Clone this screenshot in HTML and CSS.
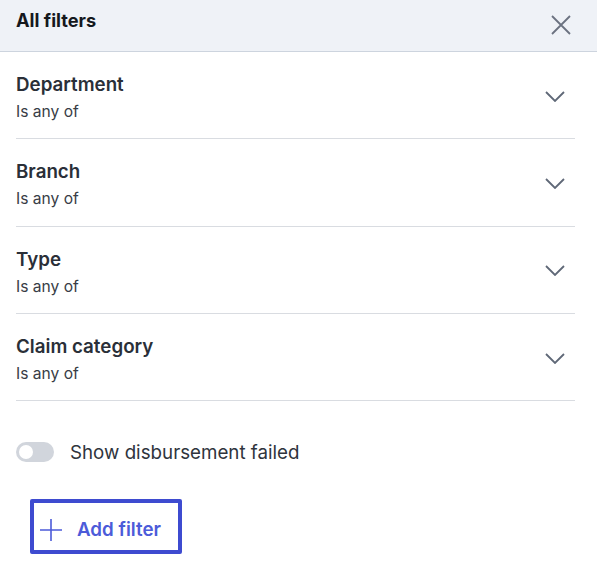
FILE: index.html
```html
<!DOCTYPE html>
<html>
<head>
<meta charset="utf-8">
<link rel="stylesheet" href="styles.css">
</head>
<body>
<div class="panel">
  <div class="header">
    <div class="title">All filters</div>
    <button class="close" aria-label="Close">
      <svg width="20" height="20" viewBox="0 0 20 20"><path d="M1 1 L19 19 M19 1 L1 19" stroke="#6b7280" stroke-width="1.8" fill="none"/></svg>
    </button>
  </div>
  <div class="rows">
    <div class="row">
      <div class="text"><div class="name">Department</div><div class="sub">Is any of</div></div>
      <svg class="chev" width="20" height="11" viewBox="0 0 20 11"><path d="M1 1 L10 10 L19 1" stroke="#5f6877" stroke-width="1.8" fill="none"/></svg>
    </div>
    <div class="row">
      <div class="text"><div class="name">Branch</div><div class="sub">Is any of</div></div>
      <svg class="chev" width="20" height="11" viewBox="0 0 20 11"><path d="M1 1 L10 10 L19 1" stroke="#5f6877" stroke-width="1.8" fill="none"/></svg>
    </div>
    <div class="row">
      <div class="text"><div class="name">Type</div><div class="sub">Is any of</div></div>
      <svg class="chev" width="20" height="11" viewBox="0 0 20 11"><path d="M1 1 L10 10 L19 1" stroke="#5f6877" stroke-width="1.8" fill="none"/></svg>
    </div>
    <div class="row">
      <div class="text"><div class="name">Claim category</div><div class="sub">Is any of</div></div>
      <svg class="chev" width="20" height="11" viewBox="0 0 20 11"><path d="M1 1 L10 10 L19 1" stroke="#5f6877" stroke-width="1.8" fill="none"/></svg>
    </div>
  </div>
  <div class="toggle-row">
    <span class="toggle"><span class="knob"></span></span>
    <span class="toggle-label">Show disbursement failed</span>
  </div>
  <div class="actions">
    <button class="add">
      <svg width="22" height="22" viewBox="0 0 22 22"><path d="M11 0 V22 M0 11 H22" stroke="#4c5bd9" stroke-width="1.6" fill="none"/></svg>
      <span>Add filter</span>
    </button>
  </div>
</div>
</body>
</html>
```
FILE: styles.css
```css
* { box-sizing: border-box; }
html, body { margin: 0; padding: 0; background: #fff; }
body { font-family: Inter, "Noto Sans", sans-serif; }
.panel { width: 597px; height: 578px; overflow: hidden; }
.header {
  height: 52px;
  background: #eff2f7;
  border-bottom: 1px solid #cdd4de;
  display: flex;
  align-items: flex-start;
  justify-content: space-between;
  padding: 8px 26px 0 16px;
}
.title { font-size: 18.2px; font-weight: 700; color: #15181d; line-height: 24px; }
.close { background: none; border: 0; padding: 0; margin-top: 7px; display: flex; }
.rows { margin: 0 22px 0 16px; }
.row {
  display: flex;
  align-items: center;
  justify-content: space-between;
  border-bottom: 1px solid #d9dce1;
  padding: 21px 10px 15px 0;
  height: 87.33px;
}
.chev { margin-bottom: 4px; }
.name { font-size: 18.75px; font-weight: 600; color: #2a2f38; line-height: 24px; }
.sub { font-size: 15.6px; color: #383d46; line-height: 22px; margin-top: 4px; }
.toggle-row {
  display: flex;
  align-items: center;
  gap: 16px;
  padding: 0 16px;
  margin-top: 40px;
  height: 22px;
}
.toggle {
  width: 38px; height: 20px; border-radius: 10px; background: #d1d5dc;
  display: flex; align-items: center; padding-left: 3px;
}
.knob { width: 14px; height: 14px; border-radius: 50%; background: #fff; }
.toggle-label { font-size: 18.75px; color: #2f343d; }
.actions { padding-left: 30px; margin-top: 36px; }
.add {
  display: flex; align-items: center; gap: 15px;
  width: 152px; height: 55px;
  border: 4px solid #3e4bd0; border-radius: 2px;
  background: #fff; padding: 6px 0 0 6px;
  font-family: Inter, "Noto Sans", sans-serif;
  font-size: 18.75px; font-weight: 600; color: #4c5bd9;
}
```
